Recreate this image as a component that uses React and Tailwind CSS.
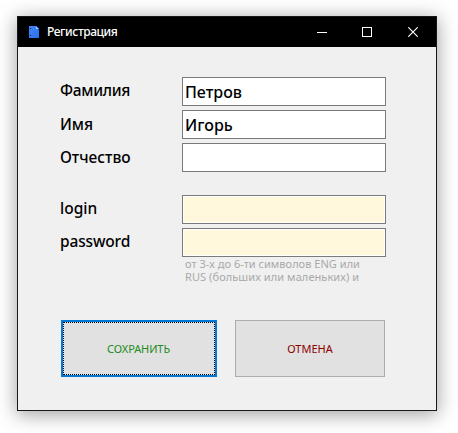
import React from 'react';

function Field({ label, labelClass, value = '', secure = false, type = 'text' }) {
  return (
    <label className="flex h-[29px] items-start">
      <span className="w-[122px] shrink-0 whitespace-nowrap text-[15.5px] leading-[27px] font-medium text-black">
        <span className={labelClass}>{label}</span>
      </span>
      <input
        type={type}
        defaultValue={value}
        className={`h-[29px] w-[204px] border border-[#7a7a7a] px-[2px] text-[16px] leading-[27px] font-medium text-black outline-none ${
          secure ? 'bg-[#fff8dc] shadow-[inset_0_0_0_1px_#fff]' : 'bg-white'
        }`}
      />
    </label>
  );
}

function FileIcon() {
  return (
    <svg width="10" height="12" viewBox="0 0 10 12" shapeRendering="crispEdges">
      <defs>
        <linearGradient id="sheet" x1="0" y1="0" x2="1" y2="1">
          <stop offset="0" stopColor="#4285f8" />
          <stop offset="1" stopColor="#2a70ee" />
        </linearGradient>
      </defs>
      <path d="M0 0H8V1H9V2H10V12H0Z" fill="url(#sheet)" />
      <path d="M7 1H8V2H9V3H7Z" fill="#9cc2fb" />
      <path d="M8 3H10V4H9Z" fill="#174bb5" />
      <path d="M1 2H2V3H1ZM1 9H2V10H1Z" fill="#0a1838" />
    </svg>
  );
}

function TitleBar() {
  return (
    <header className="flex h-[30px] items-center bg-black text-white">
      <span className="ml-[11px] w-[18px]">
        <FileIcon />
      </span>
      <h1 className="flex-1 text-[12px] leading-[30px] font-medium tracking-[-0.42px]">Регистрация</h1>
      <button aria-label="Свернуть" className="flex h-[30px] w-[45px] items-center justify-center">
        <svg width="10" height="10" shapeRendering="crispEdges">
          <path d="M0 5.5H10" stroke="white" />
        </svg>
      </button>
      <button aria-label="Развернуть" className="flex h-[30px] w-[45px] items-center justify-center">
        <svg width="10" height="10" shapeRendering="crispEdges">
          <path d="M.5 .5H9.5V9.5H.5Z" fill="none" stroke="white" />
        </svg>
      </button>
      <button aria-label="Закрыть" className="flex h-[30px] w-[47px] items-center justify-center">
        <svg width="10" height="10">
          <path d="M.3 .3L9.7 9.7M9.7 .3L.3 9.7" stroke="white" strokeWidth="1.15" />
        </svg>
      </button>
    </header>
  );
}

export default function App() {
  return (
    <div className="h-[433px] w-[458px] overflow-hidden bg-white pt-[16px] pl-[17px] font-['Noto_Sans','Open_Sans',sans-serif]">
      <main className="h-[395px] w-[420px] border border-[#181818] bg-[#f0f0f0] shadow-[0_3px_18px_1px_rgba(0,0,0,0.36)]">
        <TitleBar />
        <form className="pt-[30px] pl-[42px]" onSubmit={(e) => e.preventDefault()}>
          <div className="flex flex-col gap-1">
            <Field label="Фамилия" value="Петров" labelClass="tracking-[-0.3px]" />
            <Field label="Имя" value="Игорь" labelClass="relative top-px" />
            <Field label="Отчество" labelClass="relative top-px" />
          </div>
          <div className="mt-[23px] flex flex-col gap-1">
            <Field label="login" secure labelClass="tracking-[0px]" />
            <Field label="password" secure type="password" labelClass="tracking-[-0.15px]" />
          </div>
          <p className="ml-[125px] flex h-[26px] flex-col text-[11px] leading-[13px] whitespace-nowrap text-[#a9a9a9]">
            <span className="tracking-[0.03px]">от 3-х до 6-ти символов ENG или</span>
            <span className="tracking-[0.08px]">RUS (больших или маленьких) и</span>
          </p>
          <div className="mt-[37px] ml-px flex gap-[18px] text-[11px]">
            <button type="submit" className="h-[57px] w-[156px] border-2 border-[#0078d7] bg-[#e1e1e1] text-[#228b22]">
              <span className="flex h-full items-center justify-center border border-dotted border-black pt-[2px] pr-px tracking-[-0.1px]">СОХРАНИТЬ</span>
            </button>
            <button type="button" className="h-[57px] w-[150px] border border-[#adadad] bg-[#e1e1e1] pt-[2px] text-[#8b0000]">
              ОТМЕНА
            </button>
          </div>
        </form>
      </main>
    </div>
  );
}
